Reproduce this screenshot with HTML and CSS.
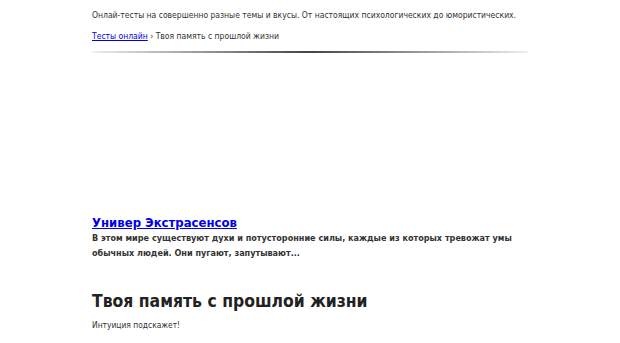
FILE: index.html
```html
<!DOCTYPE html>
<html lang="ru">
<head>
<meta charset="utf-8">
<link rel="stylesheet" href="styles.css">
</head>
<body>
<div class="wrap">
  <p class="tagline">Онлай-тесты на совершенно разные темы и вкусы. От настоящих психологических до юмористических.</p>
  <nav class="crumbs"><a href="#">Тесты онлайн</a> › Твоя память с прошлой жизни</nav>
  <hr class="rule">
  <div class="adspace"></div>
  <div class="promo">
    <a class="promo-title" href="#">Универ Экстрасенсов</a>
    <p class="promo-text">В этом мире существуют духи и потусторонние силы, каждые из которых тревожат умы обычных людей. Они пугают, запутывают...</p>
  </div>
  <h1 class="title">Твоя память с прошлой жизни</h1>
  <p class="lead">Интуиция подскажет!</p>
</div>
</body>
</html>
```

FILE: styles.css
```css
html, body { margin: 0; padding: 0; background: #fff; }
body { font-family: "DejaVu Sans Condensed", "DejaVu Sans", sans-serif; font-stretch: condensed; color: #333; }
.wrap { width: 436px; margin: 0 0 0 92px; }
.tagline { margin: 0; padding-top: 9px; font-size: 8.5px; line-height: 12px; color: #333; white-space: nowrap; }
.crumbs { margin-top: 9px; font-size: 8.5px; line-height: 12px; color: #333; }
.crumbs a { color: #00e; text-decoration: underline; }
.rule { margin: 9px 0 0; height: 2px; border: 0; background: linear-gradient(to right, #eee, #444 50%, #eee); }
.adspace { height: 162px; }
.promo-title { font-size: 13px; font-weight: bold; color: #00e; text-decoration: underline; line-height: 16px; display: block; }
.promo-text { margin: 0; font-size: 9px; font-weight: bold; line-height: 15px; color: #333; }
.title { margin: 28px 0 0; font-size: 17.4px; line-height: 24px; color: #222; }
.lead { margin: 6px 0 0; font-size: 8.4px; line-height: 12px; color: #333; }
```
